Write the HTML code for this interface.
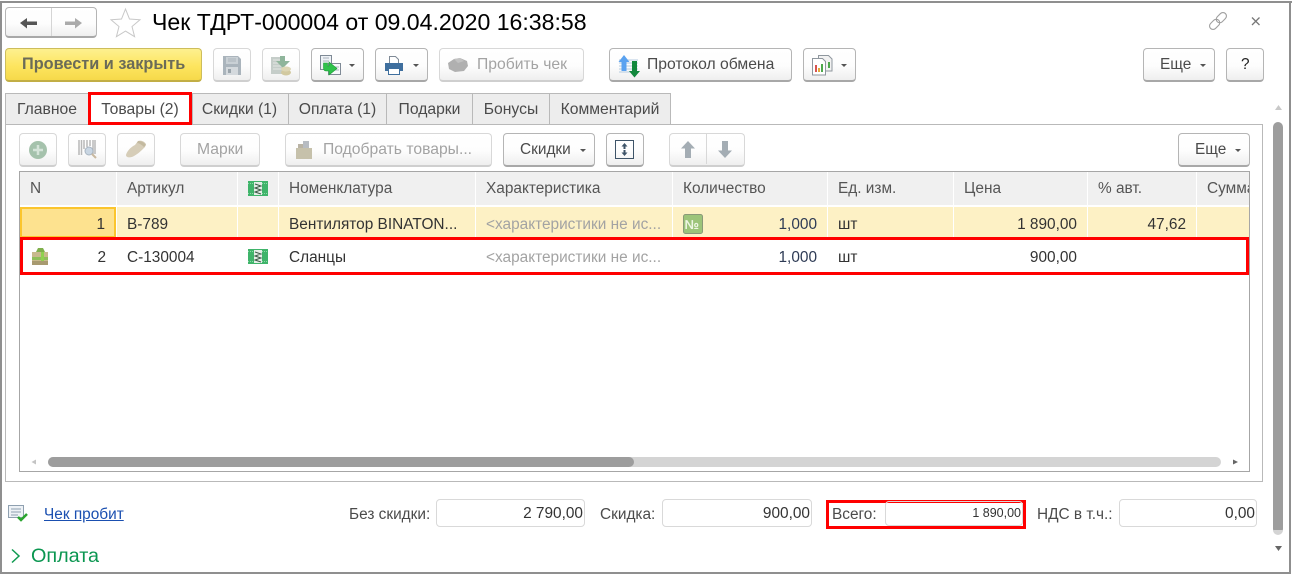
<!DOCTYPE html>
<html><head><meta charset="utf-8">
<style>
html,body{margin:0;padding:0;width:1292px;height:574px;overflow:hidden;background:#fff}
body{position:relative;font-family:"Liberation Sans",Arial,sans-serif;font-size:15.4px;color:#4b4b4b}
.a{position:absolute;white-space:nowrap}
.b{position:absolute;box-sizing:border-box;border:1px solid #b5b5b5;border-bottom:2px solid #a8a8a8;border-radius:4px;background:linear-gradient(#fff 0%,#fdfdfd 55%,#efefef 100%)}
.d{border-color:#d8d8d8;border-bottom-color:#cfcfcf}
.t{position:absolute;white-space:nowrap;line-height:17px}
.w{font-size:15.7px}
.car{position:absolute;width:0;height:0;border-left:3.5px solid transparent;border-right:3.5px solid transparent;border-top:3.500px solid #555}
.tab{position:absolute;top:93px;height:31px;box-sizing:border-box;background:#ededed;border:1px solid #b9b9b9;border-bottom:none;line-height:32px;text-align:center;font-size:15.7px}
.hc{position:absolute;top:172px;height:33px;background:#f0f0f0;line-height:34px;padding-left:10px;box-sizing:border-box;overflow:hidden;white-space:nowrap;color:#555}
.yc{position:absolute;top:207px;height:31px;background:#fdf1c5}
.r{position:absolute;white-space:nowrap;text-align:right;line-height:17px;color:#333}
.l{position:absolute;white-space:nowrap;line-height:17px;color:#333}
.f{position:absolute;box-sizing:border-box;top:499px;height:28px;border:1px solid #d9d9d9;border-radius:4px;text-align:right;padding-right:1px;line-height:28px;color:#333}
.g,.l.g{color:#a3a3a3}
svg{position:absolute;overflow:visible}
</style></head><body>
<!-- window frame -->
<div class="a" style="left:0;top:1px;width:1292px;height:2px;background:#8f8f8f"></div>
<div class="a" style="left:0;top:1px;width:2px;height:572px;background:#8f8f8f"></div>
<div class="a" style="left:1289px;top:1px;width:2px;height:572px;background:#8f8f8f"></div>
<div class="a" style="left:0;top:572px;width:1291px;height:2px;background:#8f8f8f"></div>

<!-- nav -->
<div class="b" style="left:5px;top:7px;width:92px;height:31px"></div>
<div class="a" style="left:51px;top:8px;width:1px;height:28px;background:#d5d5d5"></div>
<svg style="left:0;top:0" width="150" height="40">
<path d="M20 23l7-5v3.500h10v3.500H27v3.500z" fill="#555"/>
<path d="M82 23l-7-5v3.500H65v3.500h10v3.500z" fill="#aaa"/>
<path d="M125.500 9l4 10 10.500.8-8 6.700 2.600 10.200-9.100-5.600-9.100 5.600 2.600-10.200-8-6.700 10.500-.8z" fill="#fff" stroke="#c8c8c8" stroke-width="1"/>
</svg>
<div class="a" style="left:152px;top:9px;font-size:23.1px;line-height:26px;color:#000">Чек ТДРТ-000004 от 09.04.2020 16:38:58</div>
<svg style="left:1205px;top:10px" width="60" height="24" fill="none">
<g transform="translate(13,11) rotate(-45)" stroke="#a0a0a0" stroke-width="1.100"><rect x="-10.500" y="-3.500" width="11.500" height="7" rx="3.500"/><rect x="-1" y="-3.500" width="11.500" height="7" rx="3.500"/></g>
<path d="M47 7.500l7.500 7.500M54.500 7.500L47 15" stroke="#777" stroke-width="1.300"/>
</svg>

<!-- toolbar -->
<div class="b" style="left:5px;top:48px;width:197px;height:34px;border-color:#cdbd5c;border-bottom-color:#c2ae45;background:linear-gradient(#fdf08f,#fde55f 55%,#f6d94a)"></div>
<div class="t" style="left:22px;top:56px;font-weight:bold;font-size:16.3px;color:#6b6b58">Провести и закрыть</div>

<div class="b d" style="left:213px;top:48px;width:38px;height:34px"></div>
<svg style="left:223px;top:56px" width="18" height="19"><path d="M0 0h15l3 3v16H0z" fill="#aab4bc"/><path d="M3 1h12v7H3z" fill="#c9d0d5"/><path d="M5 3h8M5 5h8" stroke="#aab4bc"/><path d="M3 11h12v8H3z" fill="#d4d9dd"/><path d="M5 13h3v4H5z" fill="#9aa4ab"/></svg>

<div class="b d" style="left:262px;top:48px;width:38px;height:34px"></div>
<svg style="left:271px;top:56px" width="21" height="20"><path d="M0 1h13v17H0z" fill="#c5cdc9"/><path d="M2 4h9M2 7h9M2 10h9M2 13h9" stroke="#e3e6e4"/><path d="M9 0h5v5h5l-7 7-7-7h4z" fill="#8fb59b"/><ellipse cx="15" cy="16.500" rx="5" ry="3" fill="#d2c9a0"/><ellipse cx="15" cy="13" rx="5" ry="2.500" fill="#ddd6b4"/></svg>

<div class="b" style="left:311px;top:48px;width:53px;height:34px"></div>
<svg style="left:320px;top:55px" width="22" height="22"><path d="M.5.500h11v14H.5z" fill="#eef2f6" stroke="#7f8a96"/><path d="M8.500 8.500h12v11h-12z" fill="#f7f9fb" stroke="#7f8a96"/><path d="M3 3h6M3 6h6M14 12h5M14 15h5" stroke="#aab3bc"/><path d="M3.500 8v5c0 2 1 3 3 3H9v4l8-6.500L9 7v4H7.500V8z" fill="#2fc24b" stroke="#1c9e38" stroke-width=".6"/></svg>
<div class="car" style="left:349px;top:64px"></div>

<div class="b" style="left:375px;top:48px;width:53px;height:34px"></div>
<svg style="left:385px;top:56px" width="18" height="19"><path d="M4.500.5h6l3 3v5h-9z" fill="#fff" stroke="#7f8a96"/><path d="M0 7h18v8h-3v-3H3v3H0z" fill="#3f6f9e"/><path d="M3.500 12.500h11v6h-11z" fill="#fff" stroke="#3f6f9e"/></svg>
<div class="car" style="left:413px;top:64px"></div>

<div class="b d" style="left:439px;top:48px;width:145px;height:34px"></div>
<svg style="left:448px;top:58px" width="20" height="14"><path d="M0 5l6-4 6-1 7 3 1 5-4 5-9 1-6-3z" fill="#b0b0b0"/><path d="M6 1l6-1 4 3-6 2z" fill="#c2c2c2"/></svg>
<div class="t g w" style="left:477px;top:56px">Пробить чек</div>

<div class="b" style="left:609px;top:48px;width:183px;height:34px"></div>
<svg style="left:618px;top:55px" width="22" height="22"><path d="M1 5h19M1 8h19M1 11h19M1 14h19M1 17h19" stroke="#b4cbe0"/><path d="M6 0l5.500 7H8.500v9h-5V7H.5z" fill="#5aa2f0"/><path d="M14 6h5v10h3l-5.500 6.500L11 16h3z" fill="#12883d"/></svg>
<div class="t w" style="left:647px;top:56px">Протокол обмена</div>

<div class="b" style="left:803px;top:48px;width:53px;height:34px"></div>
<svg style="left:812px;top:55px" width="21" height="21"><path d="M6.500.5h10l3.500 3.500v12H6.500z" fill="#f2f2f2" stroke="#8f979e"/><path d="M.5 3.500h10l3 3v13.500H.5z" fill="#fff" stroke="#8f979e"/><path d="M3 10h2v7H3z" fill="#d9534f"/><path d="M6 13h2v4H6z" fill="#e3a93c"/><path d="M9 9h2v8H9z" fill="#4ea84c"/><path d="M16 7h2v6h-2z" fill="#4ea84c"/></svg>
<div class="car" style="left:841px;top:64px"></div>

<div class="b" style="left:1143px;top:48px;width:72px;height:34px"></div>
<div class="t" style="left:1160px;top:56px">Еще</div>
<div class="car" style="left:1200px;top:64px"></div>
<div class="b" style="left:1226px;top:48px;width:38px;height:34px"></div>
<div class="t" style="left:1241px;top:56px;color:#222">?</div>

<!-- tabs -->
<div class="a" style="left:5px;top:124px;width:1258px;height:358px;box-sizing:border-box;border:1px solid #b9b9b9"></div>
<div class="tab" style="left:5px;width:84px">Главное</div>
<div class="tab" style="left:192px;width:97px;padding-right:2px">Скидки (1)</div>
<div class="tab" style="left:288px;width:99px">Оплата (1)</div>
<div class="tab" style="left:386px;width:87px">Подарки</div>
<div class="tab" style="left:472px;width:78px">Бонусы</div>
<div class="tab" style="left:549px;width:122px">Комментарий</div>
<div class="a" style="left:88px;top:92px;width:104px;height:33px;box-sizing:border-box;border:3px solid #f00;background:#fff;text-align:center;line-height:29px;font-size:15.7px">Товары (2)</div>

<!-- sub toolbar -->
<div class="b d" style="left:19px;top:133px;width:38px;height:34px"></div>
<svg style="left:29px;top:141px" width="18" height="18"><circle cx="9" cy="9" r="9" fill="#a5c2ac"/><path d="M9 4v10M4 9h10" stroke="#d5e4d9" stroke-width="2.500"/></svg>
<div class="b d" style="left:68px;top:133px;width:38px;height:34px"></div>
<svg style="left:78px;top:140px" width="20" height="20"><path d="M1 0v15M3.500 0v15M6 0v9M9 0v7M12 0v6M15 0v14M17 0v14" stroke="#b8b8b8" stroke-width="1.500"/><circle cx="11" cy="11" r="4" fill="#c9d6e3" stroke="#a8b4c0"/><path d="M14 14l4 4" stroke="#c9b9a0" stroke-width="2"/></svg>
<div class="b d" style="left:117px;top:133px;width:38px;height:34px"></div>
<svg style="left:126px;top:141px" width="20" height="18"><path d="M0 14c1-4 5-8 9-10l3-4c3-1 6 0 8 3l-1 3c-3 3-7 7-11 9-3 2-8 2-8-1z" fill="#d6cdb8"/><path d="M12 0c3 0 6 1 8 4l-2 2c-2-2-5-4-7-4z" fill="#c3b99f"/></svg>
<div class="b d" style="left:180px;top:133px;width:80px;height:34px"></div>
<div class="t g w" style="left:197px;top:141px">Марки</div>
<div class="b d" style="left:285px;top:133px;width:207px;height:34px"></div>
<svg style="left:296px;top:140px" width="17" height="20"><path d="M2 4h6v5H2z" fill="#b9b3a4"/><path d="M7 1h6v8H7z" fill="#b7bcc2"/><path d="M0 8h16v11H0z" fill="#c6c1ab"/></svg>
<div class="t g w" style="left:323px;top:141px">Подобрать товары...</div>
<div class="b" style="left:503px;top:133px;width:92px;height:34px"></div>
<div class="t" style="left:520px;top:141px">Скидки</div>
<div class="car" style="left:580px;top:149px"></div>
<div class="b" style="left:606px;top:133px;width:38px;height:34px"></div>
<svg style="left:615px;top:140px" width="20" height="20"><rect x=".5" y=".5" width="18" height="18" fill="none" stroke="#3e5468"/><path d="M9.500 3l-3 3.500h2V9h2V6.500h2zM9.500 16l-3-3.500h2V10h2v2.500h2z" fill="#3e5468"/></svg>
<div class="b d" style="left:669px;top:133px;width:76px;height:34px"></div>
<div class="a" style="left:706px;top:134px;width:1px;height:30px;background:#d8d8d8"></div>
<svg style="left:680px;top:141px" width="60" height="18"><path d="M8 0l7 7.500h-4V17H5V7.500H1z" fill="#a4adb4"/><path d="M42 0h6v9.500h4L45 17l-7-7.500h4z" fill="#a4adb4"/></svg>
<div class="b" style="left:1178px;top:133px;width:72px;height:34px"></div>
<div class="t" style="left:1195px;top:141px">Еще</div>
<div class="car" style="left:1235px;top:149px"></div>

<!-- table -->
<div class="a" style="left:19px;top:171px;width:1231px;height:301px;box-sizing:border-box;border:1px solid #a6a6a6"></div>
<div class="hc" style="left:20px;width:96px">N</div>
<div class="hc" style="left:117px;width:120px">Артикул</div>
<div class="hc" style="left:238px;width:40px"></div>
<div class="hc" style="left:279px;width:196px">Номенклатура</div>
<div class="hc" style="left:476px;width:196px">Характеристика</div>
<div class="hc" style="left:673px;width:154px">Количество</div>
<div class="hc" style="left:828px;width:125px">Ед. изм.</div>
<div class="hc" style="left:954px;width:133px">Цена</div>
<div class="hc" style="left:1088px;width:108px">% авт.</div>
<div class="hc" style="left:1197px;width:52px">Сумма</div>

<div class="yc" style="left:20px;width:96px;background:#fde28f;box-sizing:border-box;border:2px solid #fbc52d;height:31px"></div>
<div class="yc" style="left:117px;width:120px"></div>
<div class="yc" style="left:238px;width:40px"></div>
<div class="yc" style="left:279px;width:196px"></div>
<div class="yc" style="left:476px;width:196px"></div>
<div class="yc" style="left:673px;width:154px"></div>
<div class="yc" style="left:828px;width:125px"></div>
<div class="yc" style="left:954px;width:133px"></div>
<div class="yc" style="left:1088px;width:108px"></div>
<div class="yc" style="left:1197px;width:52px"></div>

<svg style="left:248px;top:181px" width="20" height="15"><rect width="20" height="15" fill="#3fb46a"/><path d="M0 2.500h20M0 12.500h20" stroke="#8bd8a6" stroke-dasharray="1 1"/><rect x="6" y="1" width="8" height="13" fill="#e4eee7"/><path d="M7 3l6 2-6 2 6 2-6 2 6 2" stroke="#3d5a48" fill="none"/></svg>
<svg style="left:248px;top:249px" width="20" height="15"><rect width="20" height="15" fill="#3fb46a"/><path d="M0 2.500h20M0 12.500h20" stroke="#8bd8a6" stroke-dasharray="1 1"/><rect x="6" y="1" width="8" height="13" fill="#e4eee7"/><path d="M7 3l6 2-6 2 6 2-6 2 6 2" stroke="#3d5a48" fill="none"/></svg>

<div class="r" style="left:5px;width:100px;top:216px">1</div>
<div class="l" style="left:127px;top:216px">В-789</div>
<div class="l" style="left:289px;top:216px">Вентилятор BINATON...</div>
<div class="l g" style="left:486px;top:216px">&lt;характеристики не ис...</div>
<svg style="left:683px;top:214px" width="20" height="20"><rect x=".5" y=".5" width="19" height="19" rx="2" fill="#9cc47a" stroke="#8a9a78"/><text x="1.500" y="15" font-family="Liberation Sans" font-size="13" font-weight="bold" fill="#eef6e4">№</text></svg>
<div class="r" style="left:717px;width:100px;top:216px;color:#2e3b55">1,000</div>
<div class="l" style="left:838px;top:216px">шт</div>
<div class="r" style="left:977px;width:100px;top:216px">1 890,00</div>
<div class="r" style="left:1086px;width:100px;top:216px">47,62</div>

<div class="a" style="left:20px;top:237px;width:1229px;height:38px;box-sizing:border-box;border:3px solid #f00"></div>
<svg style="left:31px;top:247px" width="19" height="18"><path d="M1 5h16v13H1z" fill="#c8b98d"/><path d="M1 10h16v3H1z" fill="#8fbe5a"/><path d="M10 5h3v13h-3z" fill="#8fd14f"/><path d="M5 5l2-4h5l2 4z" fill="#7fb04c"/><path d="M1 14h16v4H1z" fill="#a89a70"/></svg>
<div class="r" style="left:6px;width:100px;top:249px">2</div>
<div class="l" style="left:127px;top:249px">С-130004</div>
<div class="l" style="left:289px;top:249px">Сланцы</div>
<div class="l g" style="left:486px;top:249px">&lt;характеристики не ис...</div>
<div class="r" style="left:717px;width:100px;top:249px;color:#2e3b55">1,000</div>
<div class="l" style="left:838px;top:249px">шт</div>
<div class="r" style="left:977px;width:100px;top:249px">900,00</div>

<!-- h scroll -->
<div class="a" style="left:48px;top:457px;width:1173px;height:10px;border-radius:5px;background:#d4d4d4"></div>
<div class="a" style="left:48px;top:457px;width:586px;height:10px;border-radius:5px;background:#9d9d9d"></div>
<svg style="left:30px;top:458px" width="1210" height="9"><path d="M6 1.500L1.500 4 6 6.500z" fill="#c4c4c4"/><path d="M1203 1.500L1208 4 1203 6.500z" fill="#666"/></svg>

<!-- v scroll -->
<div class="a" style="left:1273px;top:122px;width:10px;height:412px;border-radius:5px;background:#9d9d9d"></div>
<div class="a" style="left:1273px;top:530px;width:10px;height:5px;border-radius:0 0 5px 5px;background:#d4d4d4"></div>
<svg style="left:1274px;top:103px" width="9" height="452"><path d="M1 7l3.500-5L8 7z" fill="#c8c8c8"/><path d="M1 443h7l-3.500 5z" fill="#666"/></svg>

<!-- footer -->
<svg style="left:8px;top:505px" width="20" height="17"><path d="M.5.500h15v12H.5z" fill="#eef2f6" stroke="#8fa0b0"/><path d="M3 4h10M3 7h10M3 10h7" stroke="#8fa0b0"/><path d="M10 12l3 3 6-6" stroke="#2aa52f" stroke-width="2.500" fill="none"/></svg>
<div class="t" style="left:44px;top:506px;color:#1a4fb0;text-decoration:underline">Чек пробит</div>
<div class="t" style="left:349px;top:506px">Без скидки:</div>
<div class="f" style="left:436px;width:149px">2 790,00</div>
<div class="t" style="left:600px;top:506px">Скидка:</div>
<div class="f" style="left:662px;width:150px">900,00</div>
<div class="a" style="left:826px;top:500px;width:200px;height:29px;box-sizing:border-box;border:3px solid #f00"></div>
<div class="t" style="left:832px;top:506px">Всего:</div>
<div class="f" style="left:885px;top:501px;width:138px;height:25px;font-size:12.5px;line-height:23px">1 890,00</div>
<div class="t" style="left:1037px;top:506px">НДС в т.ч.:</div>
<div class="f" style="left:1119px;width:138px">0,00</div>
<svg style="left:10px;top:548px" width="12" height="16"><path d="M2 1.500l7 6.500-7 6.500" fill="none" stroke="#0f9a50" stroke-width="1.500"/></svg>
<div class="a" style="left:31px;top:544px;font-size:19.8px;line-height:24px;color:#0a9650">Оплата</div>
</body></html>
